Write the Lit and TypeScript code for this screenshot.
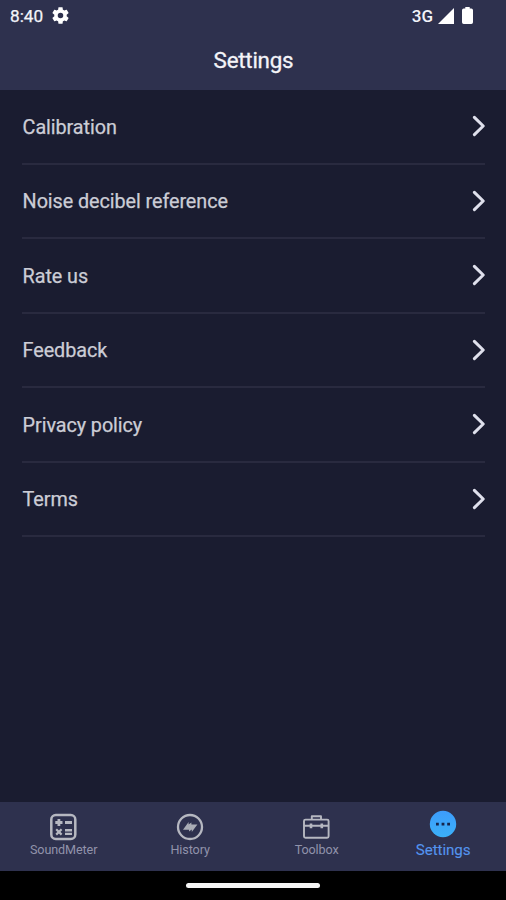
import { LitElement, html, css, svg } from "lit";
import { customElement, property } from "lit/decorators.js";

const ROWS = ["Calibration", "Noise decibel reference", "Rate us", "Feedback", "Privacy policy", "Terms"];

const gear = svg`<path fill="#fff" d="M19.14 12.94c.04-.3.06-.61.06-.94 0-.32-.02-.64-.07-.94l2.03-1.58c.18-.14.23-.41.12-.61l-1.92-3.32c-.12-.22-.37-.29-.59-.22l-2.39.96c-.5-.38-1.03-.7-1.62-.94l-.36-2.54c-.04-.24-.24-.41-.48-.41h-3.84c-.24 0-.43.17-.47.41l-.36 2.54c-.59.24-1.13.57-1.62.94l-2.39-.96c-.22-.08-.47 0-.59.22L2.74 8.87c-.12.21-.08.47.12.61l2.03 1.58c-.05.3-.09.63-.09.94s.02.64.07.94l-2.03 1.58c-.18.14-.23.41-.12.61l1.92 3.32c.12.22.37.29.59.22l2.39-.96c.5.38 1.03.7 1.62.94l.36 2.54c.05.24.24.41.48.41h3.84c.24 0 .44-.17.47-.41l.36-2.54c.59-.24 1.13-.56 1.62-.94l2.39.96c.22.08.47 0 .59-.22l1.92-3.32c.12-.22.07-.47-.12-.61l-2.01-1.58zM12 15.2a3.2 3.2 0 1 1 0-6.4 3.2 3.2 0 0 1 0 6.4z"/>`;

const calculator = svg`<g fill="none" stroke="#b6b8c1">
  <rect x="2.3" y="2" width="24" height="24" rx="4.5" stroke-width="2.5"/>
  <path stroke-width="2.8" d="M6.3 9.5h7.2M9.9 5.9v7.2M16 9.5h7"/>
  <path stroke-width="2.2" d="M7.2 16.2l5.4 5.4M12.6 16.2l-5.4 5.4"/>
  <path stroke-width="2.4" d="M16 17.3h7M16 20.9h7"/>
</g>`;

const history = svg`<circle cx="14" cy="14" r="12" fill="none" stroke="#b6b8c1" stroke-width="2.3"/>
<path fill="#a9acb5" d="M7 16.8L12.6 9v2.6L15.4 9.4v2h6L15.8 19v-2.4L13 18.6v-1.8z"/>`;

const toolbox = svg`<g fill="none" stroke="#b6b8c1" stroke-width="1.9" stroke-linejoin="round">
  <rect x="2" y="6.6" width="24.6" height="18.2" rx="1.5"/>
  <path d="M9.8 6.4V3.2h9.2v3.2M2 12.8h24.6"/>
  <path stroke-width="2.6" d="M9 10.6v4.6M19.8 10.6v4.6"/>
</g>`;

const more = svg`<defs><linearGradient id="blue" x1="0" y1="0" x2="0" y2="1"><stop offset="0" stop-color="#3d9cfb"/><stop offset="1" stop-color="#3bb0f8"/></linearGradient></defs>
<circle cx="14" cy="14" r="13.2" fill="url(#blue)"/>
<path fill="#15254c" d="M7 12.8h2.8v2.8H7zM12.6 12.8h2.8v2.8h-2.8zM18.2 12.8H21v2.8h-2.8z"/>`;

@customElement("setting-row")
class SettingRow extends LitElement {
  @property() label = "";
  static styles = css`
    :host { display: flex; align-items: center; justify-content: space-between; box-sizing: border-box;
      height: 74.5px; border-bottom: 2px solid #292a3f; }
    .label { color: #cccdd6; font-size: 19.8px; line-height: 24px; letter-spacing: -0.07px; padding: 3px 0 0 0.6px;
      -webkit-text-stroke: 0.25px #cccdd6; }
    svg { display: block; width: 14px; height: 22px; }
  `;
  render() {
    return html`<span class="label">${this.label}</span>
      <svg viewBox="0 0 14 22"><path d="M3.4 2.4L12.2 11L3.4 19.6" fill="none" stroke="#dfe0ec" stroke-width="3" stroke-linecap="round" stroke-linejoin="round"/></svg>`;
  }
}

@customElement("nav-item")
class NavItem extends LitElement {
  @property() label = "";
  @property({ attribute: false }) icon: unknown;
  @property({ type: Boolean, reflect: true }) active = false;
  static styles = css`
    :host { flex: 1; display: flex; flex-direction: column; align-items: center; padding-top: 11px; color: #9193ab; font-size: 12.6px; }
    :host([active]) { padding-top: 8px; color: #5494ee; font-size: 15.2px; }
    svg { display: block; width: 28px; height: 28px; }
    .label { line-height: 18px; letter-spacing: -0.1px; padding-left: 0.8px; }
    :host([active]) .label { line-height: 24px; letter-spacing: -0.1px; -webkit-text-stroke: 0.1px #5494ee; }
  `;
  render() {
    return html`<svg viewBox="0 0 28 28">${this.icon}</svg><span class="label">${this.label}</span>`;
  }
}

@customElement("app-root")
class AppRoot extends LitElement {
  static styles = css`
    :host { display: flex; flex-direction: column; height: 900px; background: #1a1c30; font-family: Roboto, sans-serif; overflow: hidden; }
    header { height: 90px; flex: none; background: #2e314e; }
    .status { display: flex; align-items: center; height: 31px; padding: 0 33px 0 10px; color: #f3f4fa; font-size: 17.2px; }
    .time { -webkit-text-stroke: 0.25px #f3f4fa; }
    .gear { width: 19px; height: 19px; margin-left: 7.5px; }
    .network { margin-left: auto; font-size: 17px; font-weight: 500; }
    .signal { width: 16px; height: 16px; margin-left: 5px; }
    .battery { width: 11px; height: 17px; margin-left: 8px; }
    h1 { margin: 0; height: 59px; line-height: 58px; text-align: center; font-size: 22.4px; font-weight: 400; letter-spacing: -0.25px; padding-left: 1px; color: #f4f4f8; -webkit-text-stroke: 0.3px #f4f4f8; }
    main { flex: 1; padding: 0 21px 0 22px; }
    nav { display: flex; height: 69px; flex: none; background: #2e314e; }
    .gesture { display: flex; justify-content: center; align-items: center; height: 29px; flex: none; background: #000; }
    .pill { width: 134px; height: 5px; border-radius: 2.5px; background: #f5f5f5; }
  `;
  render() {
    return html`
      <header>
        <div class="status">
          <span class="time">8:40</span>
          <svg class="gear" viewBox="1 1 22 22">${gear}</svg>
          <span class="network">3G</span>
          <svg class="signal" viewBox="0 0 16 16"><path fill="#fff" d="M0 16L16 0v16z"/></svg>
          <svg class="battery" viewBox="0 0 11 17"><path fill="#fff" d="M3.3 0h4.4v1.6h1.6Q11 1.6 11 3.3v12Q11 17 9.3 17H1.7Q0 17 0 15.3v-12Q0 1.6 1.7 1.6h1.6z"/></svg>
        </div>
        <h1>Settings</h1>
      </header>
      <main>${ROWS.map((r) => html`<setting-row .label=${r}></setting-row>`)}</main>
      <nav>
        <nav-item .label=${"SoundMeter"} .icon=${calculator}></nav-item>
        <nav-item .label=${"History"} .icon=${history}></nav-item>
        <nav-item .label=${"Toolbox"} .icon=${toolbox}></nav-item>
        <nav-item active .label=${"Settings"} .icon=${more}></nav-item>
      </nav>
      <div class="gesture"><div class="pill"></div></div>
    `;
  }
}
